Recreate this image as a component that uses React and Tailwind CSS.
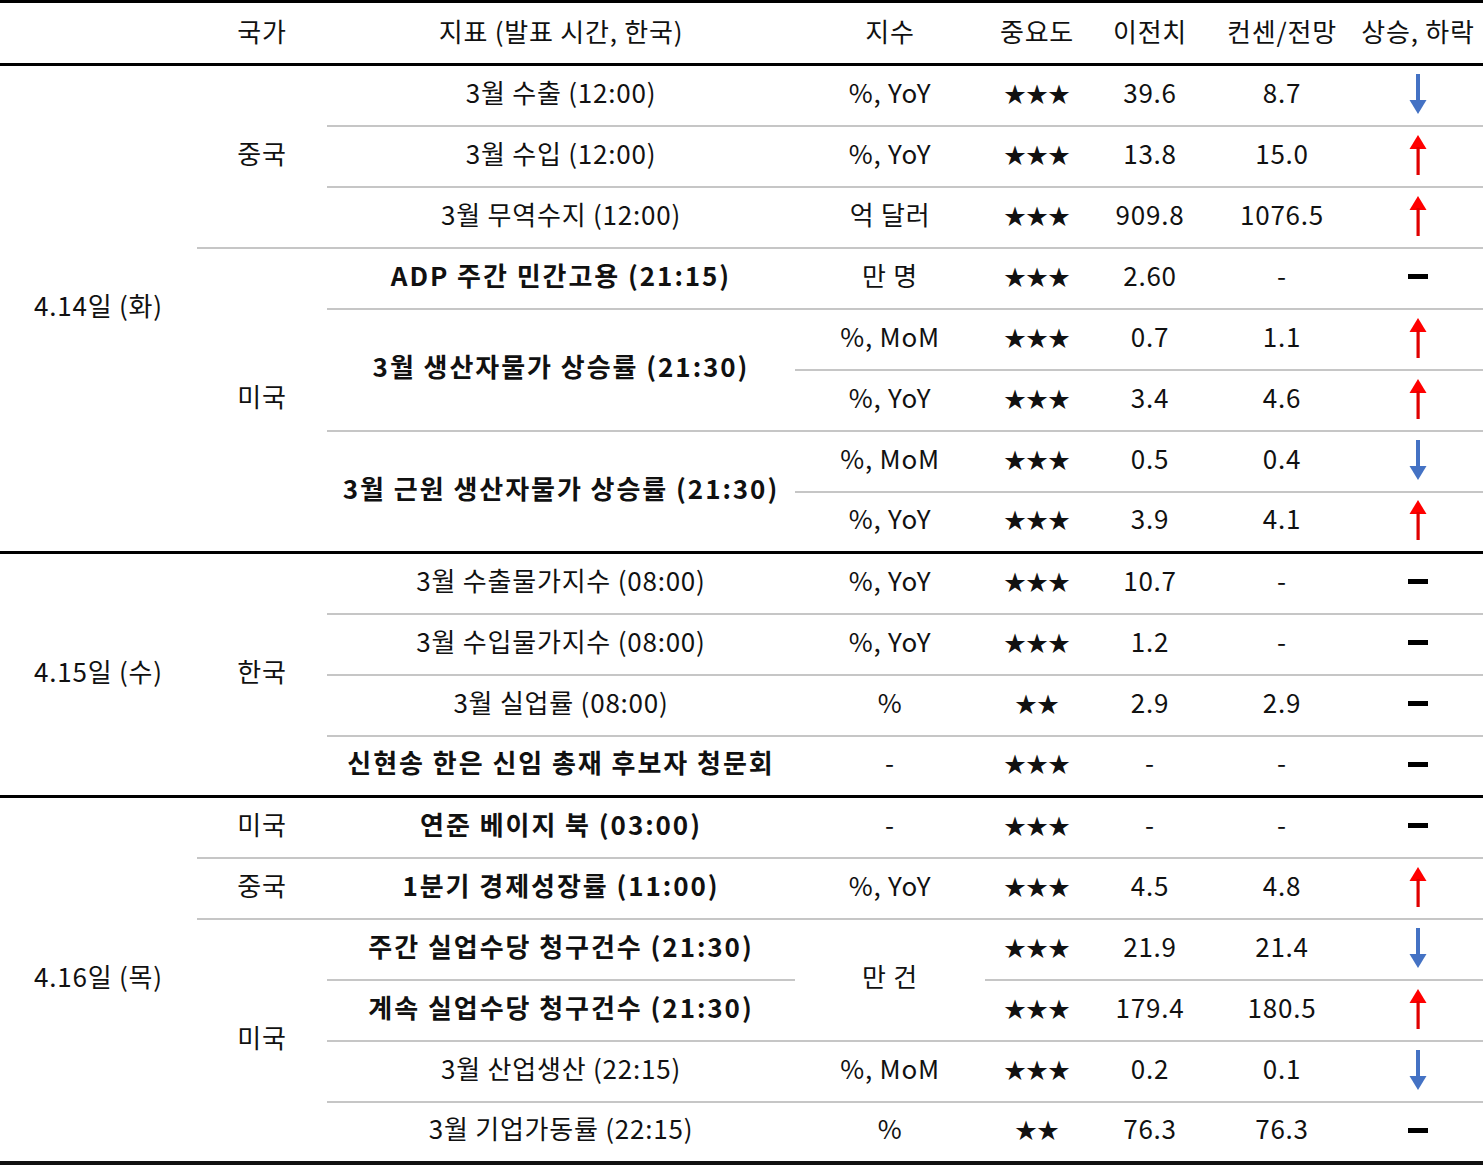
const rows = [
  { date: ['4.14일 (화)', 8], country: ['중국', 3], ind: ['3월 수출 (12:00)', 1], unit: ['%, YoY', 1], stars: 3, prev: '39.6', cons: '8.7', dir: 'down' },
  { ind: ['3월 수입 (12:00)', 1], unit: ['%, YoY', 1], stars: 3, prev: '13.8', cons: '15.0', dir: 'up' },
  { ind: ['3월 무역수지 (12:00)', 1], unit: ['억 달러', 1], stars: 3, prev: '909.8', cons: '1076.5', dir: 'up' },
  { country: ['미국', 5], ind: ['ADP 주간 민간고용 (21:15)', 1, true], unit: ['만 명', 1], stars: 3, prev: '2.60', cons: '-', dir: 'flat' },
  { ind: ['3월 생산자물가 상승률 (21:30)', 2, true], unit: ['%, MoM', 1], stars: 3, prev: '0.7', cons: '1.1', dir: 'up' },
  { unit: ['%, YoY', 1], stars: 3, prev: '3.4', cons: '4.6', dir: 'up' },
  { ind: ['3월 근원 생산자물가 상승률 (21:30)', 2, true], unit: ['%, MoM', 1], stars: 3, prev: '0.5', cons: '0.4', dir: 'down' },
  { unit: ['%, YoY', 1], stars: 3, prev: '3.9', cons: '4.1', dir: 'up', end: true },
  { date: ['4.15일 (수)', 4], country: ['한국', 4], ind: ['3월 수출물가지수 (08:00)', 1], unit: ['%, YoY', 1], stars: 3, prev: '10.7', cons: '-', dir: 'flat' },
  { ind: ['3월 수입물가지수 (08:00)', 1], unit: ['%, YoY', 1], stars: 3, prev: '1.2', cons: '-', dir: 'flat' },
  { ind: ['3월 실업률 (08:00)', 1], unit: ['%', 1], stars: 2, prev: '2.9', cons: '2.9', dir: 'flat' },
  { ind: ['신현송 한은 신임 총재 후보자 청문회', 1, true], unit: ['-', 1], stars: 3, prev: '-', cons: '-', dir: 'flat', end: true },
  { date: ['4.16일 (목)', 6], country: ['미국', 1], ind: ['연준 베이지 북 (03:00)', 1, true], unit: ['-', 1], stars: 3, prev: '-', cons: '-', dir: 'flat' },
  { country: ['중국', 1], ind: ['1분기 경제성장률 (11:00)', 1, true], unit: ['%, YoY', 1], stars: 3, prev: '4.5', cons: '4.8', dir: 'up' },
  { country: ['미국', 4], ind: ['주간 실업수당 청구건수 (21:30)', 1, true], unit: ['만 건', 2], stars: 3, prev: '21.9', cons: '21.4', dir: 'down' },
  { ind: ['계속 실업수당 청구건수 (21:30)', 1, true], stars: 3, prev: '179.4', cons: '180.5', dir: 'up' },
  { ind: ['3월 산업생산 (22:15)', 1], unit: ['%, MoM', 1], stars: 3, prev: '0.2', cons: '0.1', dir: 'down' },
  { ind: ['3월 기업가동률 (22:15)', 1], unit: ['%', 1], stars: 2, prev: '76.3', cons: '76.3', dir: 'flat', end: true },
];

const GRAY = 'border-b-2 border-[#c6c6c6]';
const BLACK = 'border-b-[3px] border-black';
const LAST = 'border-b-[4px] border-[#111]';

function lineFor(i, span) {
  const last = i + span - 1;
  if (last === rows.length - 1) return LAST;
  return rows[last].end ? BLACK : GRAY;
}

function Arrow({ dir }) {
  if (dir === 'flat') return <div className="mx-auto h-[5px] w-[20px] bg-black" />;
  if (dir === 'down')
    return (
      <svg width="20" height="40" viewBox="0 0 20 40" className="mx-auto block">
        <rect x="8" y="0" width="4" height="29" fill="#4472c4" />
        <polygon points="1.5,26 18.5,26 10,40" fill="#4472c4" />
      </svg>
    );
  return (
    <svg width="20" height="40" viewBox="0 0 20 40" className="mx-auto block">
      <polygon points="1.5,14 18.5,14 10,0" fill="#ff0000" />
      <rect x="8.5" y="12" width="3.2" height="28" fill="#e00000" />
    </svg>
  );
}

export default function App() {
  return (
    <div className="w-[1483px] bg-white text-[26px] tracking-[0.03em] text-[#111] [font-family:'Noto_Sans_CJK_KR','Noto_Sans',sans-serif]">
      <table className="w-[1483px] table-fixed border-collapse text-center">
        <colgroup>
          <col className="w-[197px]" />
          <col className="w-[130px]" />
          <col className="w-[468px]" />
          <col className="w-[190px]" />
          <col className="w-[104px]" />
          <col className="w-[122px]" />
          <col className="w-[142px]" />
          <col className="w-[130px]" />
        </colgroup>
        <thead>
          <tr className="h-[63px] border-t-[3px] border-black">
            {['', '국가', '지표 (발표 시간, 한국)', '지수', '중요도', '이전치', '컨센/전망', '상승, 하락'].map((h, i) => (
              <th key={i} className="whitespace-nowrap border-b-[3px] border-black p-0 pb-[6px] font-normal">{h}</th>
            ))}
          </tr>
        </thead>
        <tbody>
          {rows.map((r, i) => {
            const own = r.end ? (i === rows.length - 1 ? LAST : BLACK) : GRAY;
            return (
              <tr key={i} className="h-[61px]">
                {r.date && (
                  <td rowSpan={r.date[1]} className={`p-0 pb-[8px] ${lineFor(i, r.date[1])}`}>{r.date[0]}</td>
                )}
                {r.country && (
                  <td rowSpan={r.country[1]} className={`p-0 pb-[8px] ${lineFor(i, r.country[1])}`}>{r.country[0]}</td>
                )}
                {r.ind && (
                  <td
                    rowSpan={r.ind[1]}
                    className={`whitespace-nowrap p-0 pb-[8px] ${lineFor(i, r.ind[1])} ${r.ind[2] ? 'font-bold tracking-[0.075em]' : ''}`}
                  >
                    {r.ind[0]}
                  </td>
                )}
                {r.unit && (
                  <td rowSpan={r.unit[1]} className={`p-0 pb-[8px] ${lineFor(i, r.unit[1])}`}>{r.unit[0]}</td>
                )}
                <td className={`p-0 pb-[6px] text-[22px] tracking-normal ${own}`}>{'★'.repeat(r.stars)}</td>
                <td className={`p-0 pb-[8px] ${own}`}>{r.prev}</td>
                <td className={`p-0 pb-[8px] ${own}`}>{r.cons}</td>
                <td className={`p-0 pb-[3px] ${own}`}>
                  <Arrow dir={r.dir} />
                </td>
              </tr>
            );
          })}
        </tbody>
      </table>
    </div>
  );
}
